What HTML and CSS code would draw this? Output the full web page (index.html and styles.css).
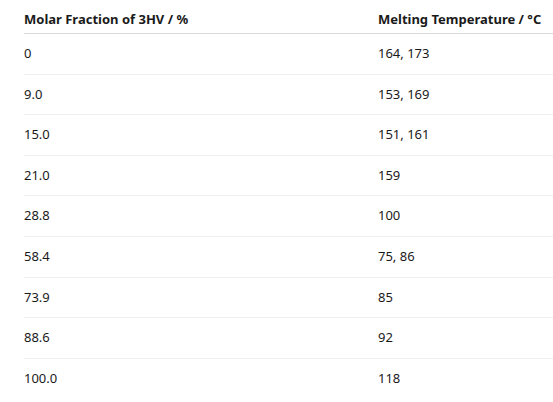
FILE: index.html
```html
<!DOCTYPE html>
<html lang="en">
<head>
    <meta charset="UTF-8">
    <meta name="viewport" content="width=device-width, initial-scale=1.0">
    <title>PHBV Melting Temperatures</title>
    <link rel="stylesheet" href="styles.css">
</head>
<body>
    <div class="table-wrap">
        <table class="data-table">
            <thead>
                <tr>
                    <th>Molar Fraction of 3HV / %</th>
                    <th>Melting Temperature / °C</th>
                </tr>
            </thead>
            <tbody>
                <tr><td>0</td><td>164, 173</td></tr>
                <tr><td>9.0</td><td>153, 169</td></tr>
                <tr><td>15.0</td><td>151, 161</td></tr>
                <tr><td>21.0</td><td>159</td></tr>
                <tr><td>28.8</td><td>100</td></tr>
                <tr><td>58.4</td><td>75, 86</td></tr>
                <tr><td>73.9</td><td>85</td></tr>
                <tr><td>88.6</td><td>92</td></tr>
                <tr class="last"><td>100.0</td><td>118</td></tr>
            </tbody>
        </table>
    </div>
</body>
</html>
```

FILE: styles.css
```css
body, html {
    margin: 0;
    padding: 0;
    background-color: #fff;
    font-family: 'Noto Sans', 'Open Sans', sans-serif;
    color: #1a1a1a;
}

.table-wrap {
    padding-left: 24px;
}

.data-table {
    width: 100%;
    border-collapse: collapse;
    font-size: 13px;
}

.data-table th,
.data-table td {
    text-align: left;
    padding: 0;
    line-height: 20px;
}

.data-table th {
    font-weight: bold;
    padding-top: 9px;
    padding-bottom: 4px;
    border-bottom: 1px solid #d9d9d9;
}

.data-table th:first-child,
.data-table td:first-child {
    width: 354px;
}

.data-table td {
    padding-top: 9px;
    padding-bottom: 10.6px;
    border-bottom: 1px solid #f0f0f0;
}

.data-table tr.last td {
    border-bottom: none;
}
```
